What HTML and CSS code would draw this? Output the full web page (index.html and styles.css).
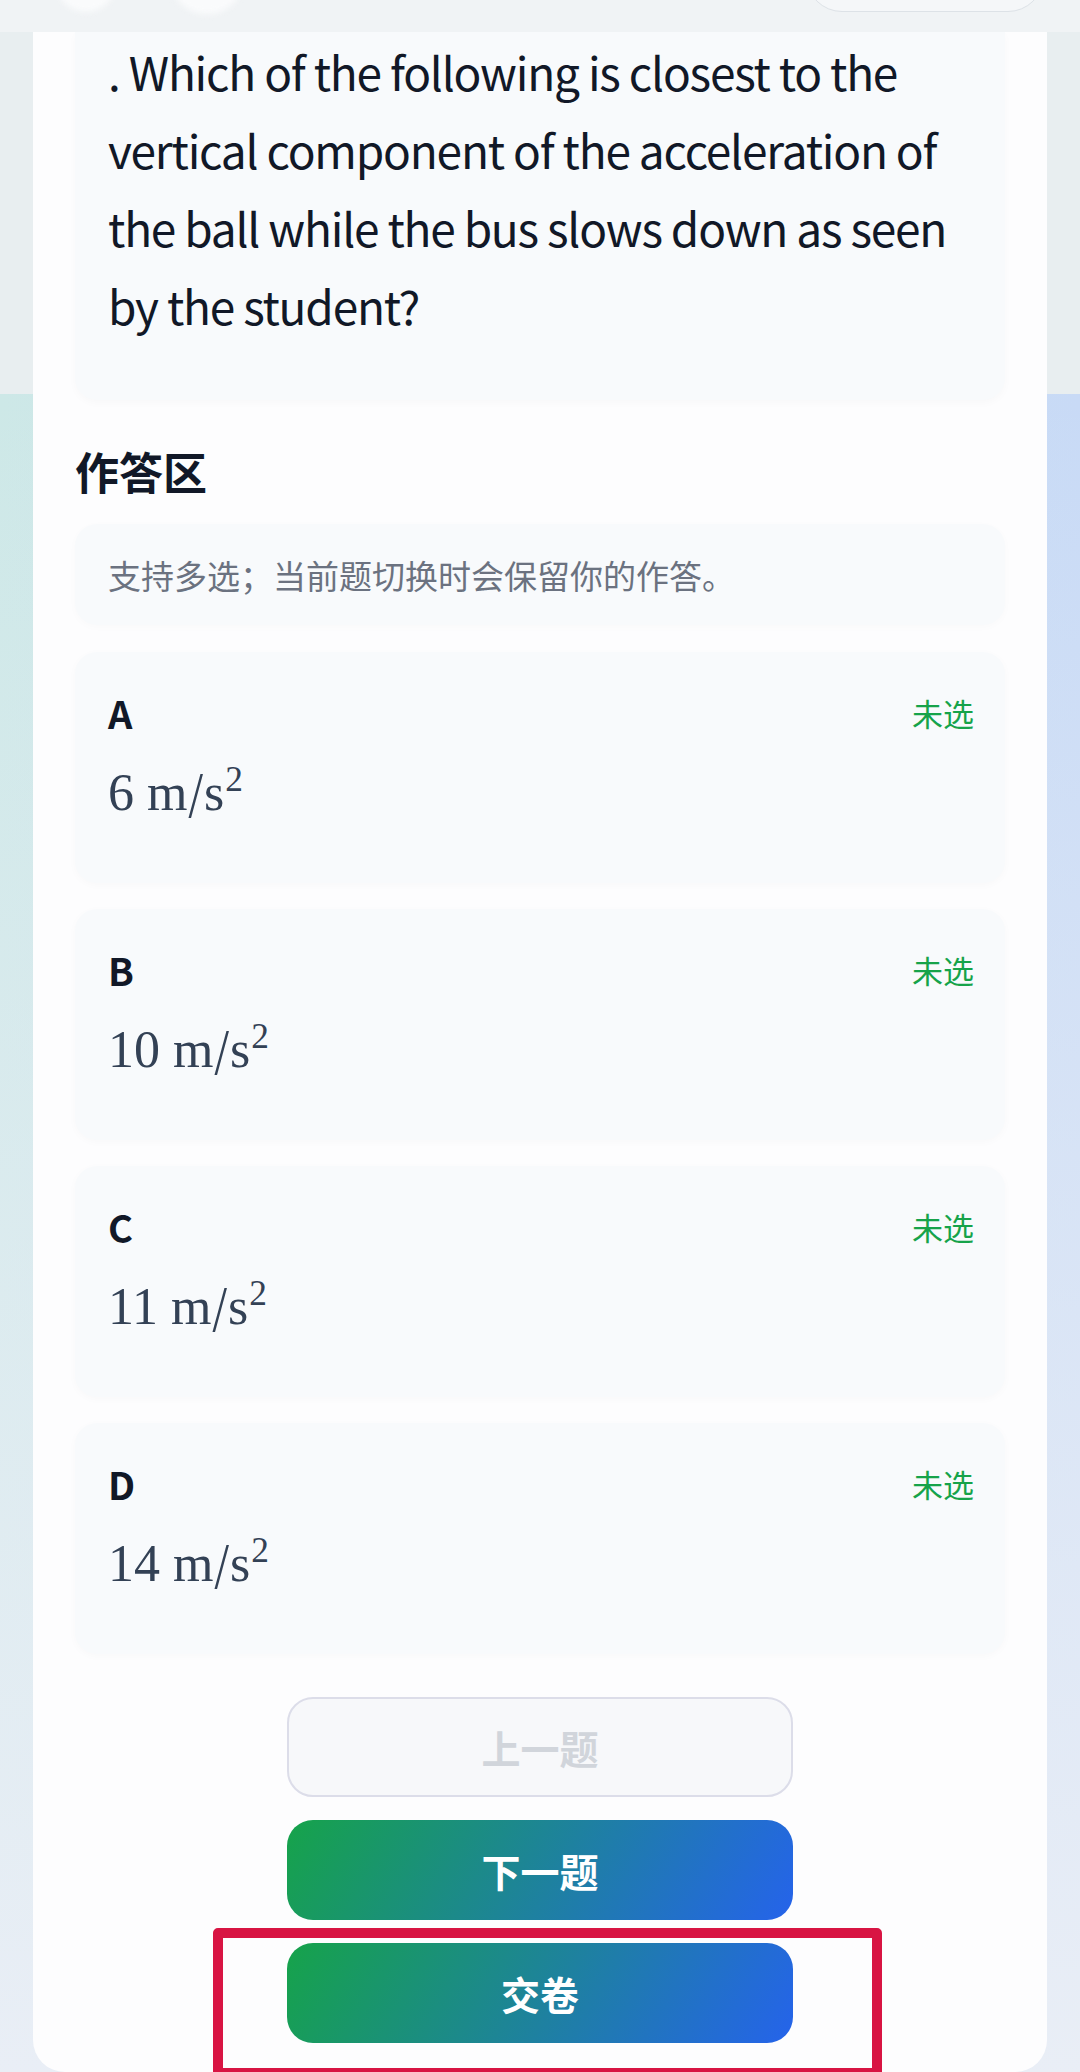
FILE: index.html
```html
<!DOCTYPE html>
<html lang="zh-CN">
<head>
<meta charset="utf-8">
<title>作答区</title>
<link rel="stylesheet" href="styles.css">
</head>
<body>
<header class="topbar">
  <span class="blob blob-1"></span>
  <span class="blob blob-2"></span>
  <span class="pill"></span>
</header>
<main class="sheet">
  <section class="question">
    <p>. Which of the following is closest to the vertical component of the acceleration of the ball while the bus slows down as seen by the student?</p>
  </section>

  <h2 class="section-title">作答区</h2>
  <div class="hint">支持多选；当前题切换时会保留你的作答。</div>

  <div class="options">
    <div class="option">
      <div class="option-head"><span class="letter">A</span><span class="state">未选</span></div>
      <div class="math">6 m<span class="slash">/</span>s<sup>2</sup></div>
    </div>
    <div class="option">
      <div class="option-head"><span class="letter">B</span><span class="state">未选</span></div>
      <div class="math">10 m<span class="slash">/</span>s<sup>2</sup></div>
    </div>
    <div class="option">
      <div class="option-head"><span class="letter">C</span><span class="state">未选</span></div>
      <div class="math">11 m<span class="slash">/</span>s<sup>2</sup></div>
    </div>
    <div class="option">
      <div class="option-head"><span class="letter">D</span><span class="state">未选</span></div>
      <div class="math">14 m<span class="slash">/</span>s<sup>2</sup></div>
    </div>
  </div>

  <div class="actions">
    <button class="btn btn-prev" disabled>上一题</button>
    <button class="btn btn-primary">下一题</button>
    <button class="btn btn-primary">交卷</button>
  </div>
</main>
<div class="highlight"></div>
</body>
</html>
```

FILE: styles.css
```css
* { box-sizing: border-box; }

html, body { margin: 0; padding: 0; }

body {
  width: 1080px;
  min-height: 2072px;
  position: relative;
  overflow: hidden;
  font-family: "Noto Sans CJK SC", "Noto Sans", sans-serif;
  color: #0f172a;
  background:
    linear-gradient(to bottom, #e8eef0 0, #e8eef0 394px, transparent 394px),
    linear-gradient(to bottom, rgba(233, 238, 246, 0) 394px, #e9eef6 2072px),
    linear-gradient(to right, #cde8e7, #c8daf6);
}

.topbar {
  height: 32px;
  position: relative;
  background: #f0f3f5;
  overflow: hidden;
}

.blob {
  position: absolute;
  top: -48px;
  width: 60px;
  height: 60px;
  border-radius: 50%;
  background: #fafbfc;
  filter: blur(3px);
}
.blob-1 { left: 56px; }
.blob-2 { left: 172px; width: 70px; height: 62px; }

.pill {
  position: absolute;
  left: 806px;
  top: -60px;
  width: 238px;
  height: 72px;
  border: 1.5px solid #dde2e7;
  border-radius: 40px;
  background: #f5f7f9;
}

.sheet {
  margin: 0 33px;
  background: #fdfdfe;
  border-radius: 0 0 32px 32px;
  padding: 0 42px 29px;
}

.question {
  background: #f8fafc;
  border-radius: 0 0 22px 22px;
  padding: 0 33px 56px;
  box-shadow: 0 3px 8px rgba(15, 23, 42, 0.025);
}

.question p {
  margin: 0;
  font-size: 46px;
  line-height: 78px;
  letter-spacing: -1.2px;
  color: #111827;
}

.section-title {
  margin: 41px 0 0;
  font-size: 44px;
  line-height: 60px;
  font-weight: 700;
  color: #111827;
}

.hint {
  margin-top: 23px;
  background: #f8fafc;
  border-radius: 22px;
  padding: 26px 33px 24px;
  font-size: 33px;
  line-height: 51px;
  color: #6b7280;
  box-shadow: 0 2px 8px rgba(15, 23, 42, 0.02);
}

.options {
  margin-top: 27px;
  display: flex;
  flex-direction: column;
  gap: 26px;
}

.option {
  height: 231px;
  background: #f8fafc;
  border-radius: 22px;
  padding: 34px 31px 0 33px;
  box-shadow: 0 2px 8px rgba(15, 23, 42, 0.025);
}

.option-head {
  display: flex;
  justify-content: space-between;
  align-items: center;
  height: 52px;
}

.letter {
  font-size: 38px;
  font-weight: 700;
  color: #111827;
}

.state {
  font-size: 31px;
  color: #16a34a;
}

.math {
  margin-top: 20px;
  font-family: "Liberation Serif", "DejaVu Serif", serif;
  font-size: 52px;
  line-height: 70px;
  color: #334155;
}

.math .slash {
  display: inline-block;
  transform: scaleY(1.25) translateY(2px);
  margin: 0 1px;
}

.math sup {
  font-size: 0.68em;
  line-height: 0;
  vertical-align: 0.55em;
  margin-left: 1px;
}

.actions {
  margin-top: 43px;
  display: flex;
  flex-direction: column;
  align-items: center;
  gap: 23px;
}

.btn {
  width: 506px;
  height: 100px;
  border-radius: 26px;
  font-family: "Noto Sans CJK SC", "Noto Sans", sans-serif;
  font-size: 39px;
  font-weight: 700;
  border: none;
  padding: 0;
}

.btn-prev {
  background: #f7f8fa;
  border: 2px solid #dcdde9;
  color: #d1d5db;
}

.btn-primary {
  background: linear-gradient(120deg, #16a34a 0%, #2563eb 100%);
  color: #ffffff;
}

.highlight {
  position: absolute;
  left: 213px;
  top: 1928px;
  width: 669px;
  height: 150px;
  border: 10px solid #d81443;
  border-radius: 5px;
  pointer-events: none;
}
```
